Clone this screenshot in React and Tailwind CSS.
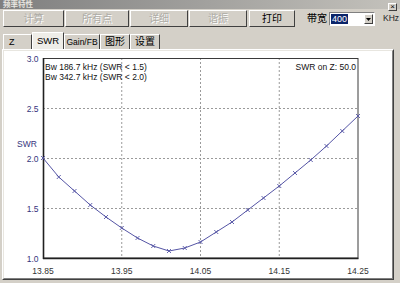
import React from "react";

const FONT = { fontFamily: '"Liberation Sans", Arial, "Noto Sans CJK SC", sans-serif' };

const ys = [158, 177, 191, 205, 217, 228, 238, 246, 251, 248, 242, 232, 222, 210, 198, 186, 173, 160, 146, 131, 116];
const pts = ys.map((y, k) => [43 + 15.75 * k, y]);

function Btn({ w, children, disabled }) {
  return (
    <div
      className={`h-[17px] ${w} flex items-center justify-center border border-t-white border-l-white border-r-[#404040] border-b-[#404040] bg-[#d4d0c8] text-[10px] leading-none ${
        disabled ? "text-[#aeaca6]" : "text-black"
      }`}
      style={disabled ? { textShadow: "1px 1px 0 #fff" } : undefined}
    >
      {children}
    </div>
  );
}

function Tab({ w, children, selected, left, size }) {
  return (
    <div
      className={`${w} ${size || "text-[10px]"} flex items-center ${left ? "justify-start pl-[5px]" : "justify-center"} border-t border-l border-r border-t-white border-l-white border-r-[#404040] leading-none text-black whitespace-nowrap overflow-hidden ${
        selected ? "h-[17px] bg-[#eeede8] relative z-10" : "h-[15px] bg-[#d4d0c8]"
      }`}
    >
      {children}
    </div>
  );
}

function Chart() {
  const vx = [121.75, 200.5, 279.25];
  const hy = [108, 158, 208];
  const yl = [
    ["3.0", 58],
    ["2.5", 108],
    ["2.0", 158],
    ["1.5", 208],
    ["1.0", 258],
  ];
  const xl = [
    ["13.85", 43],
    ["13.95", 121.75],
    ["14.05", 200.5],
    ["14.15", 279.25],
    ["14.25", 358],
  ];
  return (
    <svg width="388" height="227" viewBox="4 51 388 227" className="block">
      {vx.map((x) => (
        <line key={x} x1={x} y1={58} x2={x} y2={258} stroke="#9a9a9a" strokeWidth="1" strokeDasharray="2 2" />
      ))}
      {hy.map((y) => (
        <line key={y} x1={43} y1={y + 0.5} x2={358} y2={y + 0.5} stroke="#9a9a9a" strokeWidth="1" strokeDasharray="2 2" />
      ))}
      <rect x="43.5" y="58.5" width="314.5" height="199.5" fill="none" stroke="#3a3a3a" strokeWidth="1" />
      <line x1="43.5" y1="58" x2="43.5" y2="259" stroke="#202020" strokeWidth="1.6" />
      <line x1="43" y1="258.5" x2="358.5" y2="258.5" stroke="#202020" strokeWidth="1.6" />
      <polyline
        points={pts.map((p) => p.join(",")).join(" ")}
        fill="none"
        stroke="#5555a5"
        strokeWidth="1"
      />
      {pts.map(([x, y], i) => (
        <g key={i} stroke="#5555a5" strokeWidth="0.9">
          <line x1={x - 2} y1={y - 2} x2={x + 2} y2={y + 2} />
          <line x1={x - 2} y1={y + 2} x2={x + 2} y2={y - 2} />
        </g>
      ))}
      {yl.map(([t, y]) => (
        <text key={t} x={38.5} y={y + 3.5} textAnchor="end" fontSize="8.5" fill="#35357d" style={FONT}>
          {t}
        </text>
      ))}
      <text x={17} y={147} fontSize="8.5" fill="#35357d" style={FONT}>
        SWR
      </text>
      {xl.map(([t, x]) => (
        <text key={t} x={x} y={273.5} textAnchor="middle" fontSize="8.5" fill="#333" style={FONT}>
          {t}
        </text>
      ))}
      <text x={45} y={70} fontSize="8.5" fill="#111" style={FONT}>
        Bw 186.7 kHz (SWR &lt; 1.5)
      </text>
      <text x={45} y={80} fontSize="8.5" fill="#111" style={FONT}>
        Bw 342.7 kHz (SWR &lt; 2.0)
      </text>
      <text x={356} y={70} textAnchor="end" fontSize="8.5" fill="#111" style={FONT}>
        SWR on Z: 50.0
      </text>
    </svg>
  );
}

export default function App() {
  return (
    <div className="w-[400px] h-[283px] bg-[#d4d0c8] flex flex-col overflow-hidden" style={FONT}>
      {/* title bar */}
      <div className="h-[9px] flex items-start justify-between bg-gradient-to-r from-[#7f7f7f] to-[#c4c2bc]">
        <span className="ml-[3px] mt-[1px] text-[7.5px] leading-none font-bold text-[#e8e6e0]">频率特性</span>
        <div className="relative z-10 mt-[3px] mr-[3px] w-[9px] h-[8px] bg-[#d4d0c8] border border-t-white border-l-white border-r-[#404040] border-b-[#404040] flex items-center justify-center text-[8px] leading-none text-black">
          ×
        </div>
      </div>
      {/* toolbar */}
      <div className="h-[23px] pt-[1px] flex items-start pl-[3px]">
        <div className="flex gap-[1px]">
          <Btn w="w-[61px]" disabled>计算</Btn>
          <Btn w="w-[64px]" disabled>所有点</Btn>
          <Btn w="w-[58px]" disabled>详细</Btn>
          <Btn w="w-[58px]" disabled>谐振</Btn>
        </div>
        <div className="ml-[2px]">
          <Btn w="w-[46px]">打印</Btn>
        </div>
        <div className="ml-[12px] h-[17px] flex items-center text-[10px] leading-none text-black">带宽</div>
        <div className="ml-[2px] mt-[2px] w-[46px] h-[14px] bg-white border border-t-[#808080] border-l-[#808080] border-r-white border-b-white flex items-center">
          <span className="ml-[1px] h-[10px] px-[1px] bg-[#0a246a] text-white text-[9px] leading-[10px]">400</span>
          <div className="ml-auto mr-[1px] w-[9px] h-[10px] bg-[#d4d0c8] border border-t-white border-l-white border-r-[#404040] border-b-[#404040] flex items-center justify-center">
            <svg width="5" height="3" viewBox="0 0 5 3"><path d="M0 0h5L2.5 3z" fill="#000" /></svg>
          </div>
        </div>
        <div className="ml-[8px] h-[17px] flex items-center text-[8.5px] leading-none text-[#222]">KHz</div>
      </div>
      {/* tabs */}
      <div className="h-[17px] flex items-end pl-[3px]">
        <Tab w="w-[29px]" left size="text-[9px]">Z</Tab>
        <Tab w="w-[32px]" selected size="text-[9.5px]">SWR</Tab>
        <Tab w="w-[36px]" size="text-[8.5px]">Gain/FB</Tab>
        <Tab w="w-[30px]">图形</Tab>
        <Tab w="w-[30px]">设置</Tab>
      </div>
      {/* panel */}
      <div className="flex-1 ml-[2px] mr-[6px] mb-[3px] flex border border-t-white border-l-white border-r-[#404040] border-b-[#404040]">
        <div className="flex-1 flex border border-t-[#e8e6e0] border-l-[#e8e6e0] border-r-[#808080] border-b-[#808080] bg-white overflow-hidden">
          <Chart />
        </div>
      </div>
    </div>
  );
}
